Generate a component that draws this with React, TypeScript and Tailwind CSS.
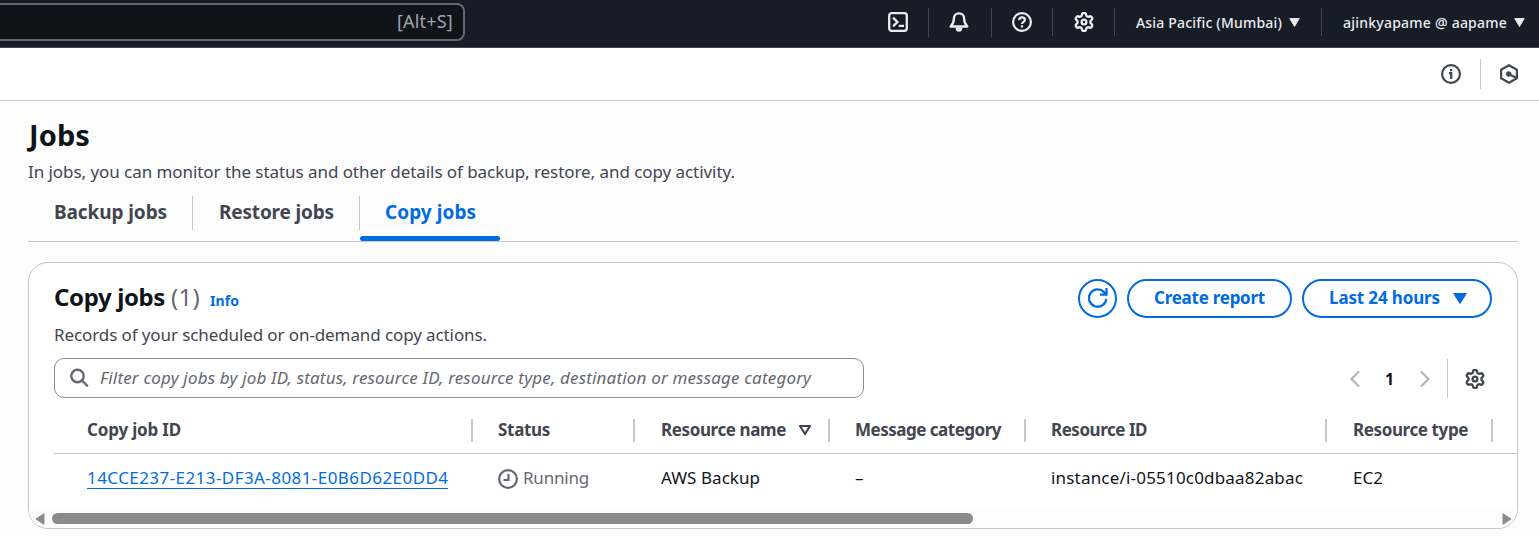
import type { ReactNode } from 'react';

function Gear({ className }: { className?: string }) {
  return (
    <svg viewBox="1 1 22 22" className={className} fill="none" stroke="currentColor" strokeWidth="2.6" strokeLinejoin="round">
      <path d="M9.671 4.136a2.34 2.34 0 0 1 4.659 0 2.34 2.34 0 0 0 3.319 1.915 2.34 2.34 0 0 1 2.33 4.033 2.34 2.34 0 0 0 0 3.831 2.34 2.34 0 0 1-2.33 4.033 2.34 2.34 0 0 0-3.319 1.915 2.34 2.34 0 0 1-4.659 0 2.34 2.34 0 0 0-3.32-1.915 2.34 2.34 0 0 1-2.33-4.033 2.34 2.34 0 0 0 0-3.831A2.34 2.34 0 0 1 6.35 6.051a2.34 2.34 0 0 0 3.319-1.915" />
      <circle cx="12" cy="12" r="2.6" />
    </svg>
  );
}

function Terminal() {
  return (
    <svg viewBox="0 0 20 20" className="size-5 shrink-0" fill="none" stroke="currentColor" strokeWidth="2.3">
      <rect x="1.2" y="1.2" width="17.6" height="17.6" rx="2.5" />
      <path d="M5 5.6 9.4 10 5 14.4M10.8 13.9H16" />
    </svg>
  );
}

function Bell() {
  return (
    <svg viewBox="0 0 20 20" className="size-5 shrink-0" fill="none" stroke="currentColor" strokeWidth="2.3" strokeLinejoin="round">
      <path d="M10 1.3c-3.200 0-5.100 2.200-5.100 5.200 0 4-1.200 6-3.300 8h16.800c-2.100-2-3.300-4-3.300-8 0-3-1.900-5.200-5.100-5.200Z" />
      <path d="M6.600 15.500a3.400 4.300 0 0 0 6.800 0Z" fill="currentColor" stroke="none" />
    </svg>
  );
}

function Help() {
  return (
    <svg viewBox="0 0 20 20" className="size-5 shrink-0" fill="none" stroke="currentColor" strokeWidth="2.200">
      <circle cx="10" cy="10" r="8.900" />
      <path d="M7.100 8.200c0-1.700 1.200-2.800 2.900-2.800 1.600 0 2.900 1 2.900 2.500 0 2-2.900 2.100-2.900 4.200" />
      <path d="M10 13.300v2.200" />
    </svg>
  );
}

function InfoIcon() {
  return (
    <svg viewBox="0 0 20 20" className="size-5 shrink-0" fill="none" stroke="currentColor" strokeWidth="2.200">
      <circle cx="10" cy="10" r="8.900" />
      <path d="M8 9.100h2.200v5.800M10.200 5v2.200" />
    </svg>
  );
}

function Hexagon() {
  return (
    <svg viewBox="0 0 20 20" className="size-5 shrink-0" fill="none" stroke="currentColor" strokeWidth="2.200" strokeLinejoin="round">
      <path d="M10 1.300 17.900 5.700v8.600L10 18.700 2.100 14.300V5.700Z" />
      <circle cx="9.700" cy="10" r="2.700" fill="currentColor" stroke="none" />
      <path d="m10 10 7.300 4" strokeWidth="2.300" />
    </svg>
  );
}

function Caret({ className }: { className?: string }) {
  return (
    <svg viewBox="0 0 12 10" preserveAspectRatio="none" className={className} fill="currentColor" stroke="currentColor" strokeWidth="1" strokeLinejoin="round">
      <path d="M.8.600h10.400L6 9.400Z" />
    </svg>
  );
}

function Refresh() {
  return (
    <svg viewBox="0 0 20 20" className="size-5" fill="none" stroke="currentColor" strokeWidth="2.300">
      <path d="M18.300 10.800A8.700 8.700 0 1 1 16 4.100l1.900 2.300" />
      <path d="M18.500 0v6.600h-6.500" />
    </svg>
  );
}

function Divider({ className }: { className: string }) {
  return <span className={`w-px shrink-0 ${className}`} />;
}

function HeadCell({ className, children }: { className: string; children: ReactNode }) {
  return (
    <div className={`flex h-[23px] items-center border-r-2 border-[#c6c6cd] ${className}`}>{children}</div>
  );
}

const columns = 'grid grid-cols-[419px_162px_195px_196px_301px_166px] items-center whitespace-nowrap';

export default function App() {
  return (
    <div className="h-[537px] w-[1539px] overflow-hidden bg-[#fcfcfd] font-['Noto_Sans',sans-serif] text-[17px] leading-6 text-[#424650]">
      <header className="flex h-12 items-start border-b border-[#424650] bg-[#161d26] text-[14px] font-medium text-[#ebebf0]">
        <div className="mt-[3px] flex h-[38px] w-[465px] items-center justify-end rounded-r-lg border-2 border-l-0 border-[#656871] bg-[#0f141a] pr-[10px] pb-0.5 text-[18px] font-normal tracking-[0.2px] text-[#a4a4ad]">
          [Alt+S]
        </div>
        <nav className="flex h-[44px] items-center whitespace-nowrap pl-[423px]">
          <Terminal />
          <Divider className="ml-5 h-[29px] bg-[#424650]" />
          <span className="ml-5"><Bell /></span>
          <Divider className="ml-[22px] h-[29px] bg-[#424650]" />
          <span className="ml-5"><Help /></span>
          <Divider className="ml-5 h-7 bg-[#424650]" />
          <span className="ml-[21px]"><Gear className="size-5 shrink-0" /></span>
          <Divider className="ml-5 h-7 bg-[#424650]" />
          <span className="ml-[21px] w-[146px] pt-px tracking-[0.190px]">Asia Pacific (Mumbai)</span>
          <Caret className="ml-[7px] h-[9px] w-[11px]" />
          <Divider className="ml-[21px] h-7 bg-[#424650]" />
          <span className="ml-[21px] w-[164px] pt-px tracking-[0.230px]">ajinkyapame @ aapame</span>
          <Caret className="ml-[7px] h-[9px] w-[11px]" />
        </nav>
      </header>

      <div className="flex h-[53px] items-center justify-end border-b border-[#c6c6cd] bg-white pr-5">
        <InfoIcon />
        <Divider className="ml-[19px] h-[30px] bg-[#c6c6cd]" />
        <span className="ml-[18px]"><Hexagon /></span>
      </div>

      <main className="pr-[21px] pl-7">
        <h1 className="pt-[18px] pl-px text-[29px] leading-[32px] font-bold tracking-[0.100px] text-[#0f141a]">Jobs</h1>
        <p className="mt-[9px] tracking-[-0.058px]">In jobs, you can monitor the status and other details of backup, restore, and copy activity.</p>

        <div className="flex h-[58px] items-start border-b border-[#c6c6cd] text-[19px] font-bold whitespace-nowrap">
          <div className="mt-3 flex h-[34px] w-[165px] items-center border-r border-[#c6c6cd] pb-[3px] pl-[26px] tracking-[-0.090px]">Backup jobs</div>
          <div className="mt-3 flex h-[34px] w-[167px] items-center border-r border-[#c6c6cd] pb-[3px] pl-[26px] tracking-[-0.170px]">Restore jobs</div>
          <div className="flex h-[57px] w-[140px] flex-col justify-between text-[#006ce0]">
            <span className="mt-3 flex h-[34px] items-center pb-[3px] pl-[25px] tracking-[0.050px]">Copy jobs</span>
            <span className="h-[5px] rounded-full bg-[#006ce0]" />
          </div>
        </div>

        <section className="mt-5 h-[267px] overflow-hidden rounded-[20px] border border-[#c6c6cd] bg-white">
          <div className="flex h-[55px] items-end justify-between pr-[25px] pl-[25px]">
            <h2 className="flex items-baseline text-[24px] leading-[34px] font-bold whitespace-nowrap text-[#0f141a]">
              <span className="w-[117px] tracking-[-0.380px]">Copy jobs</span>
              <span className="w-[39px] font-normal tracking-[0.300px] text-[#656871]">(1)</span>
              <span className="text-[14px] tracking-[0.100px] text-[#006ce0]">Info</span>
            </h2>
            <div className="flex gap-[10px] font-bold whitespace-nowrap text-[#006ce0]">
              <button className="flex size-[39px] items-center justify-center rounded-full border-2 border-[#006ce0] pb-px"><Refresh /></button>
              <button className="h-[39px] w-[165px] rounded-full border-2 border-[#006ce0] pb-0.5 tracking-[-0.250px]">Create report</button>
              <button className="flex h-[39px] w-[190px] items-center rounded-full border-2 border-[#006ce0] pb-px pl-[25px]">
                <span className="w-[111px] tracking-[-0.140px]">Last 24 hours</span>
                <Caret className="ml-[13px] h-[11px] w-[14px]" />
              </button>
            </div>
          </div>
          <p className="mt-[5px] pl-[25px] tracking-[-0.100px]">Records of your scheduled or on-demand copy actions.</p>

          <div className="mt-[11px] flex items-center justify-between pr-8 pl-[25px]">
            <div className="flex h-10 w-[810px] items-center rounded-[10px] border border-[#8c8c94] pl-[15px] text-[#656871]">
              <svg viewBox="0 0 20 20" className="size-5 shrink-0" fill="none" stroke="currentColor" strokeWidth="2.400">
                <circle cx="7.500" cy="8" r="6.200" />
                <path d="m12 12.500 5.800 5.800" />
              </svg>
              <span className="pb-px pl-[10px] tracking-[0.170px] whitespace-nowrap italic">
                Filter copy jobs by job ID, status, resource ID, resource type, destination or message category
              </span>
            </div>
            <div className="flex items-center pt-px">
              <svg viewBox="0 0 12 18" className="h-[18px] w-3 text-[#b4b4bb]" fill="none" stroke="currentColor" strokeWidth="2.200"><path d="M10 1.500 2.500 9l7.500 7.500" /></svg>
              <span className="w-[58px] pr-px text-center text-[16px] font-bold text-[#0f141a]">1</span>
              <svg viewBox="0 0 12 18" className="h-[18px] w-3 text-[#b4b4bb]" fill="none" stroke="currentColor" strokeWidth="2.200"><path d="M2 1.500 9.500 9 2 16.500" /></svg>
              <Divider className="ml-4 h-[39px] bg-[#c6c6cd]" />
              <Gear className="ml-[17px] size-5" />
            </div>
          </div>

          <div className="ml-[25px]">
            <div className={`${columns} h-[56px] border-b border-[#c6c6cd] pt-[9px] font-bold`}>
              <HeadCell className="pl-[33px] tracking-[-0.180px]">Copy job ID</HeadCell>
              <HeadCell className="pl-[25px] tracking-[-0.300px]">Status</HeadCell>
              <HeadCell className="pl-[26px] tracking-[-0.390px]">
                <span className="w-[137px]">Resource name</span>
                <svg viewBox="0 0 14 12" className="h-3 w-[14px]" fill="none" stroke="currentColor" strokeWidth="2.200" strokeLinejoin="round"><path d="M2 2h10l-5 8Z" /></svg>
              </HeadCell>
              <HeadCell className="pl-[25px] tracking-[-0.490px]">Message category</HeadCell>
              <HeadCell className="pl-[25px] tracking-[-0.470px]">Resource ID</HeadCell>
              <HeadCell className="pl-[26px] tracking-[-0.390px]">Resource type</HeadCell>
            </div>
            <div className={`${columns} h-[55px] pb-[7px] text-[#0f141a]`}>
              <div className="pl-[33px]">
                <a className="inline-block h-[23px] border-b border-[#006ce0] tracking-[0.430px] text-[#006ce0]">14CCE237-E213-DF3A-8081-E0B6D62E0DD4</a>
              </div>
              <div className="flex items-center pl-[25px] text-[#656871]">
                <svg viewBox="0 0 20 20" className="mt-0.5 mr-[5px] size-5" fill="none" stroke="currentColor" strokeWidth="2.200">
                  <circle cx="10" cy="10" r="8.900" />
                  <path d="M10.500 5v6H5.500" />
                </svg>
                <span className="tracking-[-0.200px]">Running</span>
              </div>
              <div className="pl-[26px] tracking-[0.050px]">AWS Backup</div>
              <div className="pl-[25px]">–</div>
              <div className="pl-[25px] tracking-[0.190px]">instance/i-05510c0dbaa82abac</div>
              <div className="pl-[26px]">EC2</div>
            </div>
          </div>

          <div className="flex h-[19px] items-center justify-between bg-[#fcfcfc] pr-[5px] pl-[6px] text-[#8b8b8b]">
            <svg viewBox="0 0 10 12" className="h-3 w-[10px]" fill="currentColor" stroke="currentColor" strokeLinejoin="round"><path d="M9 .700v10.600L1 6Z" /></svg>
            <span className="mr-auto ml-[7px] h-[11px] w-[921px] rounded-full bg-[#8b8b8b]" />
            <svg viewBox="0 0 10 12" className="h-3 w-[10px]" fill="currentColor" stroke="currentColor" strokeLinejoin="round"><path d="M1 .700v10.600L9 6Z" /></svg>
          </div>
        </section>
      </main>
    </div>
  );
}
